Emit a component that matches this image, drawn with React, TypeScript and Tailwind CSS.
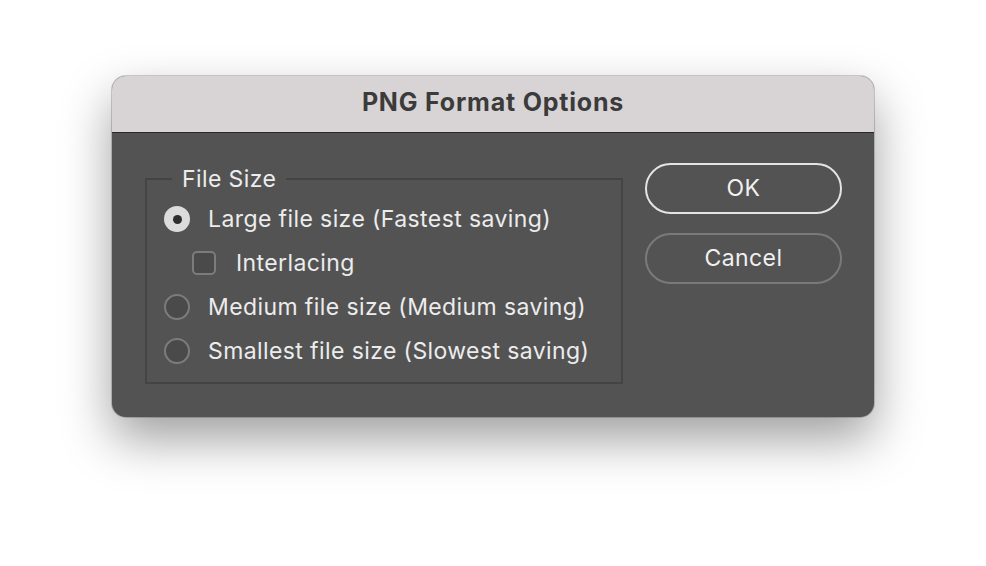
import React from 'react';

const options = [
  { label: 'Large file size (Fastest saving)', checked: true },
  { label: 'Medium file size (Medium saving)', checked: false },
  { label: 'Smallest file size (Slowest saving)', checked: false },
];

const font = { fontFamily: 'Inter, "Liberation Sans", sans-serif' };

const Radio = ({ checked }: { checked: boolean }) =>
  checked ? (
    <span className="flex h-[26px] w-[26px] shrink-0 items-center justify-center rounded-full bg-[#dcdcdc]">
      <span className="h-[9px] w-[9px] rounded-full bg-[#2f2f2f]" />
    </span>
  ) : (
    <span className="h-[26px] w-[26px] shrink-0 rounded-full border-2 border-[#7c7c7c] bg-[#4a4a4a]" />
  );

const Row = ({ checked, label }: { checked: boolean; label: string }) => (
  <div className="flex h-[44px] items-center gap-[18px]">
    <Radio checked={checked} />
    <span>{label}</span>
  </div>
);

export default function App() {
  return (
    <div className="h-[566px] w-[986px] bg-white pl-[112px] pt-[76px]" style={font}>
      <div className="w-[762px] overflow-hidden rounded-[14px] bg-[#535353] shadow-[0_22px_50px_rgba(0,0,0,0.38),0_0_0_1px_rgba(0,0,0,0.18)]">
        <div className="flex h-[57px] items-center justify-center border-b border-[#2a2a2a] bg-[#d8d4d5] pb-[2px] text-[25px] font-bold tracking-[0.8px] text-[#3b3b3b]">
          PNG Format Options
        </div>
        <div className="flex h-[284px] pl-[33px] pr-[32px] pt-[30px] text-[23px] tracking-[0.4px] text-[#ececec]">
          <fieldset className="mt-[4px] h-[217px] w-[478px] border-2 border-[#444444] pl-[17px] pr-[10px]">
            <legend className="ml-[8px] px-[10px] leading-[24px]">File Size</legend>
            <div className="pt-[6px]">
              <Row {...options[0]} />
              <div className="flex h-[44px] items-center gap-[20px] pl-[28px]">
                <span className="h-[24px] w-[24px] rounded-[5px] border-2 border-[#7c7c7c] bg-[#4a4a4a]" />
                <span>Interlacing</span>
              </div>
              <Row {...options[1]} />
              <Row {...options[2]} />
            </div>
          </fieldset>
          <div className="ml-[22px] flex w-[197px] flex-col gap-[19px]">
            <button className="h-[51px] rounded-full border-2 border-[#e4e4e4] text-[#f0f0f0]">OK</button>
            <button className="h-[51px] rounded-full border-2 border-[#7a7a7a] text-[#f0f0f0]">Cancel</button>
          </div>
        </div>
      </div>
    </div>
  );
}
